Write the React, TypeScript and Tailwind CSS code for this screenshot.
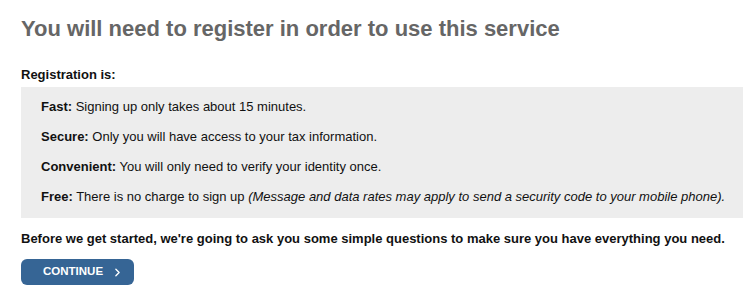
import { ChevronRight } from 'lucide-react';

const ITEMS = [
  { label: 'Fast:', text: 'Signing up only takes about 15 minutes.' },
  { label: 'Secure:', text: 'Only you will have access to your tax information.' },
  { label: 'Convenient:', text: 'You will only need to verify your identity once.' },
];

export default function App() {
  return (
    <div className="bg-white w-[743px] h-[300px] pl-[21px] pt-[14px] text-[#111] font-['Liberation_Sans',Arial,sans-serif]">
      <h1 className="text-[22px] leading-[30px] font-bold text-[#666666]">
        You will need to register in order to use this service
      </h1>
      <p className="mt-[23px] text-[13px] leading-[16px] font-bold">Registration is:</p>
      <div className="mt-[4px] bg-[#ededed] pl-[20px] pt-[5px] pb-[6px] text-[13px]">
        {ITEMS.map(item => (
          <p key={item.label} className="leading-[30px]">
            <span className="font-bold">{item.label}</span> {item.text}
          </p>
        ))}
        <p className="leading-[30px]">
          <span className="font-bold">Free:</span> There is no charge to sign up{' '}
          <span className="italic">(Message and data rates may apply to send a security code to your mobile phone).</span>
        </p>
      </div>
      <p className="mt-[13px] text-[13px] leading-[16px] font-bold">
        Before we get started, we're going to ask you some simple questions to make sure you have everything you need.
      </p>
      <button className="mt-[12px] flex items-center gap-[8px] h-[26px] w-[113px] pl-[22px] rounded-[6px] bg-[#366595] text-white text-[11.5px] font-bold">
        CONTINUE
        <ChevronRight size={13} strokeWidth={2.5} />
      </button>
    </div>
  );
}
